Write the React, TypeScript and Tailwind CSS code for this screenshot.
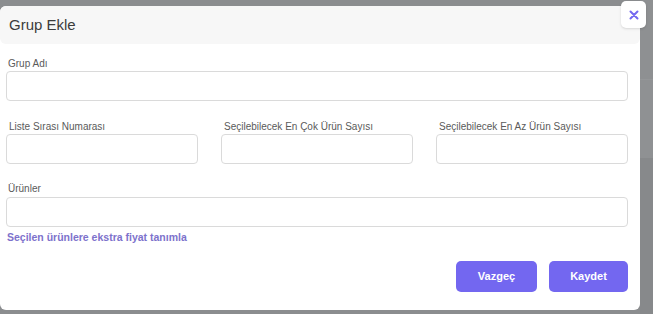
import React from "react";

const font = { fontFamily: '"Liberation Sans", Arial, sans-serif' };

function Field({ label, className = "" }: { label: string; className?: string }) {
  return (
    <div className={"flex flex-col " + className}>
      <div className="h-[12px] pl-[3px] text-[10px] leading-[12px] text-[#5a5a5a]">{label}</div>
      <div className="mt-[1px] h-[30px] rounded-[4px] border border-[#dadada] bg-white" />
    </div>
  );
}

export default function App() {
  return (
    <div className="relative flex h-[314px] w-[653px] overflow-hidden bg-[#8b8d8f]" style={font}>
      <div className="mt-[6px] flex h-[304px] w-[640px] shrink-0 flex-col rounded-[6px] bg-white">
        <div className="flex h-[38px] items-center rounded-[6px] bg-[#f7f7f7] pl-[9px]">
          <span className="text-[15px] text-[#3c3c3c]">Grup Ekle</span>
        </div>
        <div className="flex flex-col pl-[6px] pr-[12px] pt-[14px]">
          <div className="flex flex-col">
            <div className="h-[12px] pl-[2px] text-[10px] leading-[12px] text-[#5a5a5a]">Grup Adı</div>
            <div className="mt-[1px] h-[30px] rounded-[4px] border border-[#dadada] bg-white" />
          </div>
          <div className="mt-[20px] grid grid-cols-3 gap-[23px]">
            <Field label="Liste Sırası Numarası" />
            <Field label="Seçilebilecek En Çok Ürün Sayısı" />
            <Field label="Seçilebilecek En Az Ürün Sayısı" />
          </div>
          <div className="mt-[19px] flex flex-col">
            <div className="h-[12px] pl-[2px] text-[10px] leading-[12px] text-[#5a5a5a]">Ürünler</div>
            <div className="mt-[2px] h-[30px] rounded-[4px] border border-[#dadada] bg-white" />
          </div>
          <div className="mt-[3px] h-[14px] pl-[1px] text-[10.5px] font-bold leading-[14px] text-[#7d72cc]">
            Seçilen ürünlere ekstra fiyat tanımla
          </div>
          <div className="mt-[17px] flex justify-end gap-[12px]">
            <button className="h-[31px] w-[81px] rounded-[5px] bg-[#7367f0] text-[11px] font-bold text-white">
              Vazgeç
            </button>
            <button className="h-[31px] w-[79px] rounded-[5px] bg-[#7367f0] text-[11px] font-bold text-white">
              Kaydet
            </button>
          </div>
        </div>
      </div>
      <div className="flex flex-1 flex-col">
        <div className="h-[79px] bg-[#8e9092]" />
        <div className="h-[79px] border-t border-[#949698] bg-[#8f9193]" />
        <div className="flex-1 bg-[#87898b]" />
      </div>
      <button className="absolute left-[621px] top-[1px] flex h-[27px] w-[25px] items-center justify-center rounded-[5px] bg-white shadow-sm">
        <svg width="10" height="10" viewBox="0 0 10 10">
          <path d="M1.5 1.5L8.5 8.5M8.5 1.5L1.5 8.5" stroke="#7367f0" strokeWidth="2" strokeLinecap="round" />
        </svg>
      </button>
    </div>
  );
}
